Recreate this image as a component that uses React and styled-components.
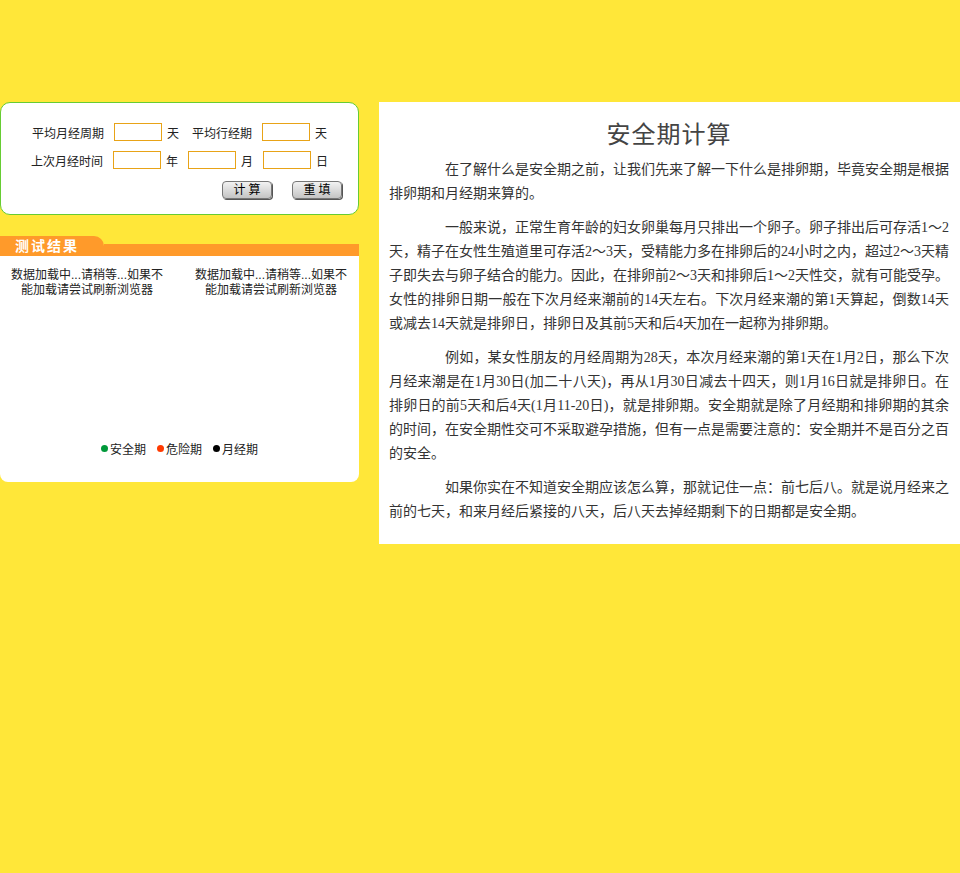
import React from 'react';
import styled, { createGlobalStyle } from 'styled-components';

const GlobalStyle = createGlobalStyle`
    html, body {
        margin: 0;
        padding: 0;
        background: #ffe739;
    }
    body {
        font-family: "Liberation Sans", "Noto Sans CJK SC", sans-serif;
        font-size: 12px;
        color: #333;
    }
`

// Styled Components
const Page = styled.div`
    display: flex;
    align-items: flex-start;
    gap: 20px;
    padding-top: 102px;
    min-height: 873px;
    box-sizing: border-box;
`
const LeftColumn = styled.div`
    width: 359px;
    flex: none;
`
const FormPanel = styled.div`
    background: #fff;
    border: 1px solid #66cc33;
    border-radius: 10px;
    height: 113px;
    box-sizing: border-box;
    padding-top: 15px;
`
const FormRow = styled.div`
    display: flex;
    align-items: center;
    justify-content: center;
    height: 28px;
`
const Label = styled.span`
    margin-right: 10px;
    margin-left: ${props => props.$first ? '0' : '13px'};
    color: #222;
`
const Unit = styled.span`
    margin-left: 5px;
    color: #222;
    margin-right: ${props => props.$gap || '0'};
`
const Input = styled.input`
    width: 48px;
    height: 18px;
    box-sizing: border-box;
    border: 1px solid #e8a317;
    padding: 0 2px;
    font-size: 12px;
    outline: none;
`
const ButtonRow = styled.div`
    display: flex;
    justify-content: flex-end;
    gap: 20px;
    margin-top: 7px;
    padding-right: 16px;
`
const Button = styled.button`
    width: 50px;
    height: 18px;
    padding: 0;
    border: 1px solid #777;
    border-radius: 4px;
    background: linear-gradient(#f2f2f2, #c4c4c4);
    box-shadow: 1px 1px 0 #555;
    font-family: "Liberation Sans", "Noto Sans CJK SC", sans-serif;
    font-size: 12px;
    letter-spacing: 3px;
    text-indent: 3px;
    color: #000;
    line-height: 16px;
`
const ResultHeader = styled.div`
    display: flex;
    align-items: flex-end;
    height: 20px;
    margin-top: 21px;
`
const Tab = styled.div`
    width: 104px;
    height: 20px;
    background: #ff9a2a;
    border-radius: 0 10px 0 0;
    color: #fff;
    font-weight: bold;
    font-size: 14px;
    letter-spacing: 2px;
    line-height: 20px;
    padding-left: 15px;
    box-sizing: border-box;
`
const Bar = styled.div`
    flex: 1;
    height: 12px;
    background: #ff9a2a;
`
const ResultBody = styled.div`
    background: #fff;
    height: 226px;
    border-radius: 0 0 8px 8px;
    padding-top: 12px;
    box-sizing: border-box;
    display: flex;
    flex-direction: column;
`
const Charts = styled.div`
    display: flex;
    gap: 24px;
    padding-left: 7px;
    flex: 1;
`
const ChartBox = styled.div`
    width: 160px;
    text-align: center;
    line-height: 15px;
    color: #222;
`
const Legend = styled.div`
    display: flex;
    justify-content: center;
    gap: 11px;
    padding-bottom: 25px;
    color: #222;
`
const LegendItem = styled.span`
    display: flex;
    align-items: center;
    gap: 2px;
`
const Dot = styled.i`
    width: 7px;
    height: 7px;
    border-radius: 50%;
    background: ${props => props.$color};
`
const Article = styled.div`
    flex: 1;
    background: #fff;
    padding: 15px 11px 10px 10px;
    font-family: "Liberation Serif", "Noto Sans CJK SC", serif;
    font-size: 14px;
    color: #333;
`
const Title = styled.h1`
    margin: 0 0 5px;
    text-align: center;
    font-size: 24px;
    letter-spacing: 1px;
    line-height: 36px;
    font-weight: normal;
    color: #444;
`
const Para = styled.p`
    margin: 0 0 10px;
    line-height: 24px;
    text-indent: 4em;
    text-align: justify;
`

const legend = [
    { label: '安全期', color: '#00993a' },
    { label: '危险期', color: '#ff3a00' },
    { label: '月经期', color: '#000' },
]

const paragraphs = [
    '在了解什么是安全期之前，让我们先来了解一下什么是排卵期，毕竟安全期是根据排卵期和月经期来算的。',
    '一般来说，正常生育年龄的妇女卵巢每月只排出一个卵子。卵子排出后可存活1～2天，精子在女性生殖道里可存活2～3天，受精能力多在排卵后的24小时之内，超过2～3天精子即失去与卵子结合的能力。因此，在排卵前2～3天和排卵后1～2天性交，就有可能受孕。女性的排卵日期一般在下次月经来潮前的14天左右。下次月经来潮的第1天算起，倒数14天或减去14天就是排卵日，排卵日及其前5天和后4天加在一起称为排卵期。',
    '例如，某女性朋友的月经周期为28天，本次月经来潮的第1天在1月2日，那么下次月经来潮是在1月30日(加二十八天)，再从1月30日减去十四天，则1月16日就是排卵日。在排卵日的前5天和后4天(1月11-20日)，就是排卵期。安全期就是除了月经期和排卵期的其余的时间，在安全期性交可不采取避孕措施，但有一点是需要注意的：安全期并不是百分之百的安全。',
    '如果你实在不知道安全期应该怎么算，那就记住一点：前七后八。就是说月经来之前的七天，和来月经后紧接的八天，后八天去掉经期剩下的日期都是安全期。',
]

const loadingText = '数据加载中...请稍等...如果不能加载请尝试刷新浏览器'

const App = () => {
    return (
        <>
            <GlobalStyle />
            <Page>
                <LeftColumn>
                    <FormPanel>
                        <FormRow>
                            <Label $first>平均月经周期</Label>
                            <Input />
                            <Unit>天</Unit>
                            <Label>平均行经期</Label>
                            <Input />
                            <Unit>天</Unit>
                        </FormRow>
                        <FormRow>
                            <Label $first>上次月经时间</Label>
                            <Input />
                            <Unit $gap="10px">年</Unit>
                            <Input />
                            <Unit $gap="10px">月</Unit>
                            <Input />
                            <Unit>日</Unit>
                        </FormRow>
                        <ButtonRow>
                            <Button>计算</Button>
                            <Button>重填</Button>
                        </ButtonRow>
                    </FormPanel>

                    <ResultHeader>
                        <Tab>测试结果</Tab>
                        <Bar />
                    </ResultHeader>
                    <ResultBody>
                        <Charts>
                            <ChartBox>{loadingText}</ChartBox>
                            <ChartBox>{loadingText}</ChartBox>
                        </Charts>
                        <Legend>
                            {legend.map(item => (
                                <LegendItem key={item.label}>
                                    <Dot $color={item.color} />
                                    {item.label}
                                </LegendItem>
                            ))}
                        </Legend>
                    </ResultBody>
                </LeftColumn>

                <Article>
                    <Title>安全期计算</Title>
                    {paragraphs.map((text, i) => (
                        <Para key={i}>{text}</Para>
                    ))}
                </Article>
            </Page>
        </>
    )
}

export default App
